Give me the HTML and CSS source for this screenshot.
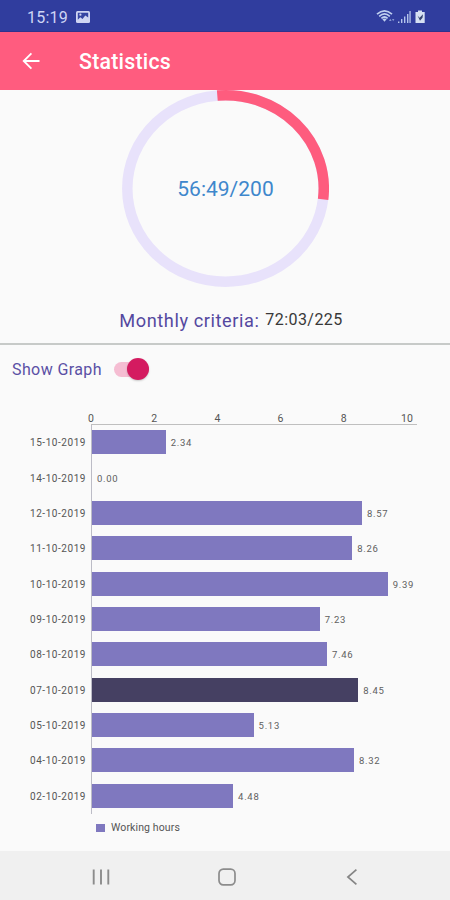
FILE: index.html
```html
<!DOCTYPE html>
<html lang="en">
<head>
<meta charset="utf-8">
<title>Statistics</title>
<link rel="stylesheet" href="styles.css">
</head>
<body>
<div class="screen">
  <header class="status">
    <span class="clock">15:19</span>
    <svg class="photo" width="14" height="12" viewBox="0 0 14 12"><rect width="14" height="12" rx="1.5" fill="#cfd5f3"/><path d="M1.8 1.8h10.4v4.6L9.3 4.4 6.5 8 4.3 6.3 1.8 8.8z" fill="#3645a3"/><circle cx="4.4" cy="3.7" r="1.1" fill="#cfd5f3"/></svg>
    <svg class="signals" width="50" height="16" viewBox="0 0 50 16">
      <g fill="none" stroke="#bfd0ef" stroke-width="1.7"><path d="M1 5.2Q8.5-1.5 16 5.2"/><path d="M3.2 7.4Q8.5 2.5 13.8 7.4"/><path d="M5.4 9.4Q8.5 6.6 11.6 9.4"/></g>
      <path d="M6.4 10.2Q8.5 8.6 10.6 10.2L8.5 12.8z" fill="#bfd0ef"/>
      <path d="M13 12l1.3-2.2 1.3 2.2zM16 10l1.2 2.2 1.2-2.2z" fill="#8497d3"/>
      <path d="M22 12.5h1.4v1.5H22zM25 10h1.4v4H25zM28 7.5h1.4V14H28zM31 5h1.4v9H31zM33.4 2h1.3v12h-1.3z" fill="#b4c4ea"/>
      <path d="M42 1.5h4v1.6h2.7V14h-9.2V3.1H42z" fill="#d5e0f3"/>
      <path d="M41.5 6.5l2 2.3 3.5-3.6-.5 3.6-2.5 3z" fill="#35436f"/>
    </svg>
  </header>
  <div class="appbar">
    <svg width="18" height="18" viewBox="0 0 18 18" fill="none" stroke="#fff" stroke-width="1.8"><path d="M17.5 9H1.8M9.4 1.3L1.7 9l7.7 7.7"/></svg>
    <h1>Statistics</h1>
  </div>
  <section class="summary">
    <div class="ring">
      <svg width="207" height="197" viewBox="0 0 207 197" fill="none" stroke-width="10.5">
        <ellipse cx="103.5" cy="98.5" rx="98.2" ry="93.2" stroke="#e8e2fb"/>
        <path d="M95.3 5.6A98.2 93.2 0 0 1 201.1 109.4" stroke="#fe5c7e"/>
      </svg>
      <span class="ring-value">56:49/200</span>
    </div>
    <p class="criteria"><span class="criteria-label">Monthly criteria:</span><span class="criteria-value">72:03/225</span></p>
  </section>
  <div class="toggle-row">
    <span class="toggle-label">Show Graph</span>
    <span class="switch"><span class="thumb"></span></span>
  </div>
  <section class="chart">
    <div class="ticks"><span>0</span><span>2</span><span>4</span><span>6</span><span>8</span><span>10</span></div>
    <div class="rows">
      <div class="row"><span class="date">15-10-2019</span><div class="track"><div class="bar" style="--v:2.34"></div><span class="val">2.34</span></div></div>
      <div class="row"><span class="date">14-10-2019</span><div class="track"><div class="bar" style="--v:0"></div><span class="val">0.00</span></div></div>
      <div class="row"><span class="date">12-10-2019</span><div class="track"><div class="bar" style="--v:8.57"></div><span class="val">8.57</span></div></div>
      <div class="row"><span class="date">11-10-2019</span><div class="track"><div class="bar" style="--v:8.26"></div><span class="val">8.26</span></div></div>
      <div class="row"><span class="date">10-10-2019</span><div class="track"><div class="bar" style="--v:9.39"></div><span class="val">9.39</span></div></div>
      <div class="row"><span class="date">09-10-2019</span><div class="track"><div class="bar" style="--v:7.23"></div><span class="val">7.23</span></div></div>
      <div class="row"><span class="date">08-10-2019</span><div class="track"><div class="bar" style="--v:7.46"></div><span class="val">7.46</span></div></div>
      <div class="row"><span class="date">07-10-2019</span><div class="track"><div class="bar selected" style="--v:8.45"></div><span class="val">8.45</span></div></div>
      <div class="row"><span class="date">05-10-2019</span><div class="track"><div class="bar" style="--v:5.13"></div><span class="val">5.13</span></div></div>
      <div class="row"><span class="date">04-10-2019</span><div class="track"><div class="bar" style="--v:8.32"></div><span class="val">8.32</span></div></div>
      <div class="row"><span class="date">02-10-2019</span><div class="track"><div class="bar" style="--v:4.48"></div><span class="val">4.48</span></div></div>
    </div>
    <div class="legend"><i class="key"></i><span>Working hours</span></div>
  </section>
  <nav class="navbar">
    <svg width="18" height="18" viewBox="0 0 18 18"><path d="M1.7 1.5v15M9 1.5v15M16.3 1.5v15" stroke="#8c8c8c" stroke-width="1.9"/></svg>
    <svg width="18" height="18" viewBox="0 0 18 18"><rect x="1" y="1.2" width="16" height="15.6" rx="4.3" fill="none" stroke="#8c8c8c" stroke-width="1.7"/></svg>
    <svg width="18" height="18" viewBox="0 0 18 18"><path d="M13.4 1.6L4.9 9l8.5 7.4" fill="none" stroke="#858585" stroke-width="1.7"/></svg>
  </nav>
</div>
</body>
</html>
```
FILE: styles.css
```css
* { box-sizing: border-box; }
body { margin: 0; font-family: Roboto, sans-serif; background: #fafafa; }
.screen { width: 450px; height: 900px; display: flex; flex-direction: column; overflow: hidden; background: #fafafa; }
.status { height: 32px; flex: none; display: flex; align-items: center; padding: 3px 24px 0 27px; background: #303d9e; border-bottom: 1px solid #30328c; }
.clock { font-size: 16px; letter-spacing: .2px; color: #ced5f5; width: 49px; }
.signals { margin-left: auto; }
.appbar { height: 58px; flex: none; display: flex; align-items: center; gap: 39px; padding: 0 22px 1px; background: #ff5c7f; color: #fff; }
.appbar h1 { margin: 2px 0 0; font-size: 21.3px; font-weight: 500; letter-spacing: .25px; }
.summary { height: 253px; flex: none; display: flex; flex-direction: column; align-items: center; }
.ring { display: grid; place-items: center; width: 207px; height: 197px; margin-left: 1px; }
.ring > * { grid-area: 1 / 1; }
.ring-value { font-size: 21px; color: #3e87cc; }
.criteria { display: flex; margin: 22px 0 0 12px; line-height: 24px; }
.criteria-label { width: 146px; font-size: 18.2px; letter-spacing: .58px; color: #54489f; white-space: nowrap; }
.criteria-value { font-size: 16px; letter-spacing: .45px; line-height: 22px; color: #383838; }
.toggle-row { height: 54px; flex: none; display: flex; align-items: center; gap: 12px; padding: 0 0 4px 12px; border-top: 2px solid #c7cac8; }
.toggle-label { width: 90px; font-size: 16px; letter-spacing: .4px; color: #5b50a5; white-space: nowrap; }
.switch { display: flex; align-items: center; justify-content: flex-end; width: 35px; height: 15px; border-radius: 8px; background: #f5bdd2; }
.thumb { flex: none; width: 22px; height: 22px; border-radius: 50%; background: #d41b60; box-shadow: 0 1px 2px #0003; }
.chart { height: 454px; flex: none; padding-top: 14px; color: #555; font-size: 10px; }
.ticks { display: grid; grid-template-columns: repeat(6, 63.2px); height: 14px; margin-left: 59.4px; line-height: 16px; font-size: 10.5px; text-align: center; color: #555; }
.rows { display: grid; grid-template-rows: repeat(11, 35.35px); }
.row { display: grid; grid-template-columns: 91px 326px; }
.date { align-self: center; justify-self: end; margin-right: 5px; width: 56px; font-size: 10px; letter-spacing: .55px; white-space: nowrap; }
.track { display: flex; align-items: center; padding-bottom: 1px; border-left: 1px solid #bcbcc6; }
.row:first-child .track { box-shadow: 0 -1px #bfbfbf; }
.bar { flex: none; width: calc(var(--v) * 31.5px); height: 24px; background: #7f78bf; }
.selected { background: #454062; }
.val { margin-left: 5px; padding-top: 1px; font-size: 9.5px; letter-spacing: .7px; color: #606060; }
.legend { display: flex; align-items: center; gap: 6px; height: 28px; padding-left: 96px; font-size: 10.5px; letter-spacing: .12px; }
.key { width: 9px; height: 8px; background: #7f78bf; }
.navbar { flex: 1; display: flex; align-items: center; justify-content: space-between; padding: 2px 89px 0 92px; background: #f0f0f0; }
```
